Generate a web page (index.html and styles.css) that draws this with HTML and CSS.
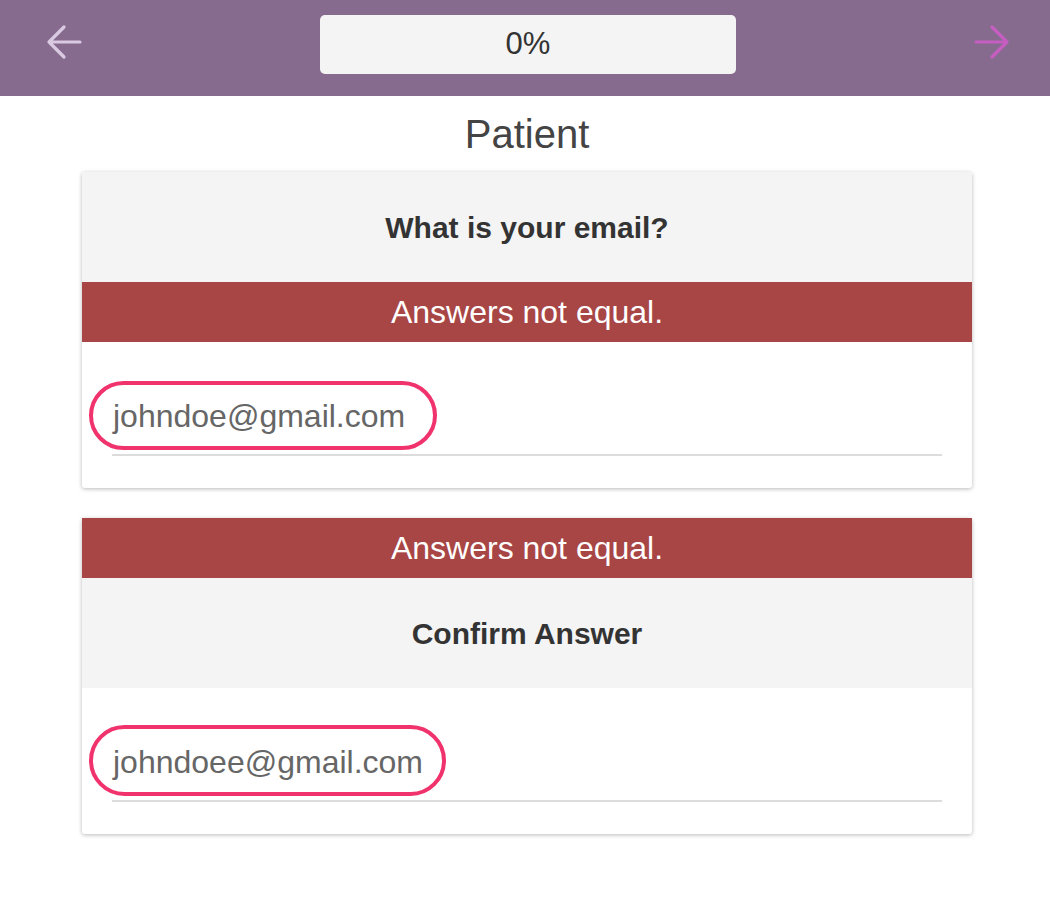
FILE: index.html
```html
<!DOCTYPE html>
<html lang="en">
<head>
<meta charset="utf-8">
<title>Patient</title>
<link rel="stylesheet" href="styles.css">
</head>
<body>
<header class="topbar">
  <button class="nav-btn back" aria-label="Back">
    <svg width="36" height="36" viewBox="0 0 36 36"><path d="M3 18H34M18 3L3 18L18 33" fill="none" stroke="currentColor" stroke-width="3.2" stroke-linecap="round" stroke-linejoin="round"/></svg>
  </button>
  <div class="progress">0%</div>
  <button class="nav-btn next" aria-label="Next">
    <svg width="36" height="36" viewBox="0 0 36 36"><path d="M2 18H33M18 3L33 18L18 33" fill="none" stroke="currentColor" stroke-width="3.2" stroke-linecap="round" stroke-linejoin="round"/></svg>
  </button>
</header>
<main class="content">
  <h1 class="section-title">Patient</h1>
  <section class="card">
    <div class="card-head">What is your email?</div>
    <div class="error-band">Answers not equal.</div>
    <div class="answer">
      <div class="field"><span class="circled">johndoe@gmail.com</span></div>
    </div>
  </section>
  <section class="card">
    <div class="error-band">Answers not equal.</div>
    <div class="card-head">Confirm Answer</div>
    <div class="answer">
      <div class="field"><span class="circled wide">johndoee@gmail.com</span></div>
    </div>
  </section>
</main>
</body>
</html>
```
FILE: styles.css
```css
* { box-sizing: border-box; }
body {
  margin: 0;
  font-family: "Liberation Sans", Arial, sans-serif;
  background: #ffffff;
  color: #333;
}
.topbar {
  height: 96px;
  background: #866b8f;
  display: flex;
  align-items: center;
  justify-content: space-between;
  padding: 0 40px 0 46px;
}
.nav-btn {
  background: none;
  border: 0;
  padding: 0;
  width: 36px;
  height: 36px;
  display: flex;
  margin-top: -12px;
}
.nav-btn.back { color: #d9c9e1; }
.nav-btn.next { color: #c65ec1; }
.progress {
  width: 416px;
  height: 59px;
  margin-top: -8px;
  background: #f4f4f4;
  border-radius: 5px;
  display: flex;
  align-items: center;
  justify-content: center;
  font-size: 31px;
  color: #333;
}
.content {
  padding: 0 78px 40px 82px;
  display: flex;
  flex-direction: column;
  gap: 30px;
}
.section-title {
  margin: 0 0 -30px;
  height: 76px;
  line-height: 76px;
  text-align: center;
  font-weight: normal;
  font-size: 40px;
  color: #444;
}
.card {
  background: #fff;
  border-radius: 3px;
  box-shadow: 0 1px 4px rgba(0,0,0,0.28);
}
.card-head {
  background: #f4f4f4;
  height: 110px;
  display: flex;
  align-items: center;
  justify-content: center;
  font-size: 30px;
  font-weight: bold;
  color: #333;
  padding-top: 2px;
}
.card > .card-head:first-child { border-radius: 3px 3px 0 0; }
.error-band {
  background: #a84545;
  height: 60px;
  display: flex;
  align-items: center;
  justify-content: center;
  color: #fff;
  font-size: 32px;
}
.answer {
  padding: 52px 30px 32px 30px;
}
.field {
  height: 62px;
  line-height: 44px;
  border-bottom: 2px solid #dcdcdc;
  font-size: 32px;
  color: #666;
  padding-left: 1px;
}
.circled {
  position: relative;
  display: inline-block;
}
.circled::after {
  content: "";
  position: absolute;
  top: -13px;
  bottom: -12px;
  left: -24px;
  right: -32px;
  border: 4px solid #f1336d;
  border-radius: 40px;
}
.circled.wide::after {
  top: -15px;
  bottom: -12px;
  right: -23px;
}
```
